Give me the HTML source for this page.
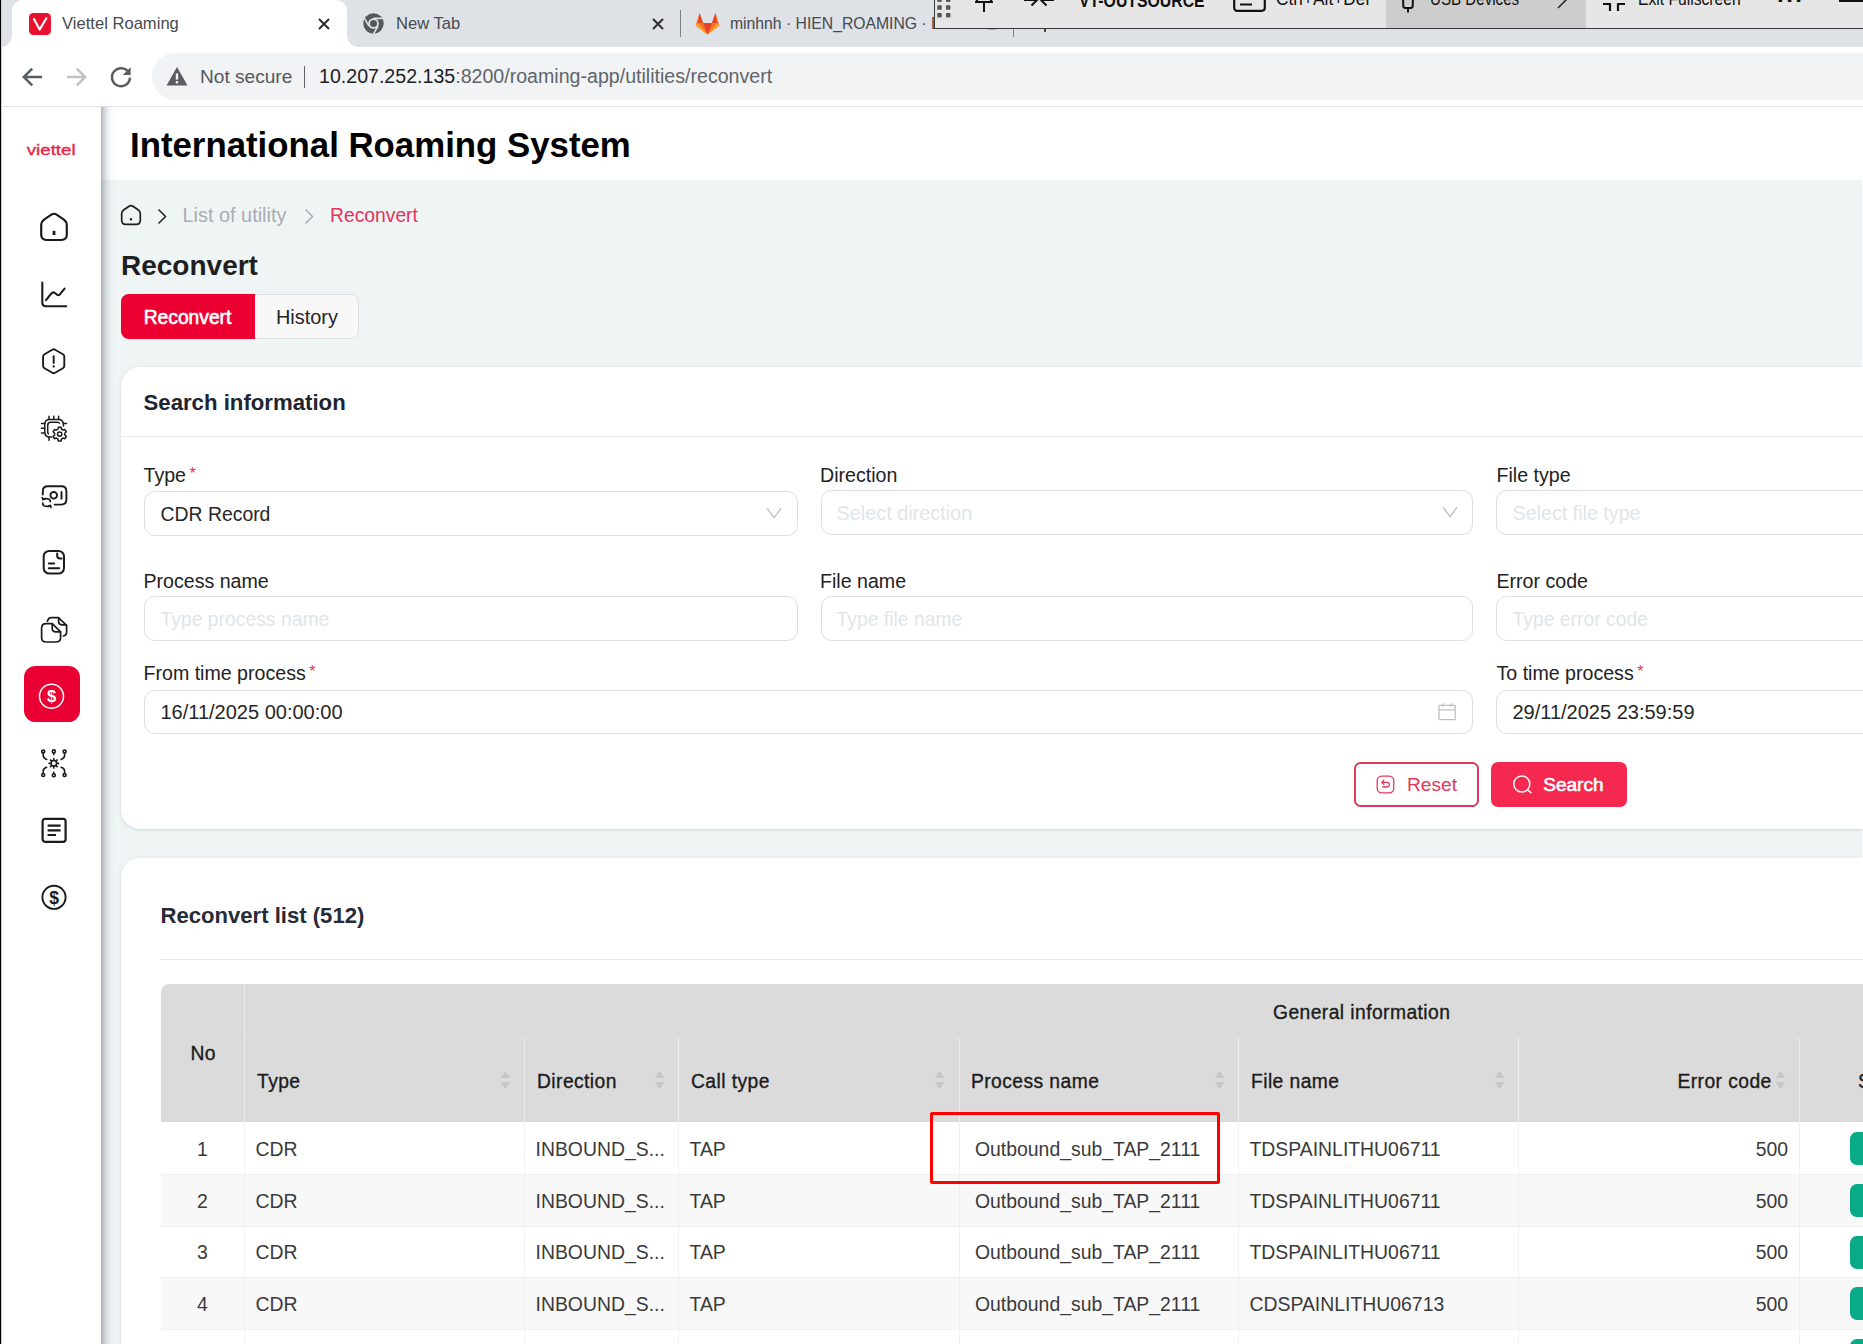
<!DOCTYPE html>
<html lang="en">
<head>
<meta charset="utf-8">
<title>Viettel Roaming</title>
<style>
*{box-sizing:border-box;margin:0;padding:0}
html,body{width:1863px;height:1344px;overflow:hidden;background:#fff}
body{font-family:"Liberation Sans",Arial,sans-serif;color:#222;position:relative}
.abs{position:absolute}
.t{position:absolute;white-space:nowrap;line-height:1}
/* ---------- browser chrome ---------- */
#tabstrip{left:0;top:0;width:1863px;height:47px;background:#dee1e6}
#acttab{left:12px;top:0;width:335px;height:47px;background:#fff;border-radius:11px 11px 0 0}
#acttab:before,#acttab:after{content:"";position:absolute;bottom:0;width:11px;height:11px}
#acttab:before{left:-11px;background:radial-gradient(circle at 0 0,transparent 10.5px,#fff 11px)}
#acttab:after{right:-11px;background:radial-gradient(circle at 100% 0,transparent 10.5px,#fff 11px)}
#navbar{left:0;top:47px;width:1863px;height:59px;background:#fff}
#omni{left:152px;top:53px;width:1800px;height:47px;border-radius:23.500px;background:#f1f3f4}
#chromeline{left:0;top:106px;width:1863px;height:1px;background:#e0e1e2}
.ct{color:#474a4f;font-size:16.6px}
/* overlay toolbar */
#ovl{left:934px;top:-30px;width:940px;height:59px;background:#e6e6e6;border:1px solid #3a3a3a;overflow:hidden}
#ovl .t{color:#111;font-size:18.5px;top:18.5px;transform-origin:0 50%}
/* ---------- app ---------- */
#side{left:1px;top:107px;width:100.400px;height:1237px;background:#fff}
#sideshadow{left:101.400px;top:107px;width:14px;height:1237px;background:linear-gradient(90deg,rgba(95,105,115,.48) 0,rgba(98,108,118,.37) 2px,rgba(100,112,122,.25) 4px,rgba(105,118,128,.12) 7px,rgba(110,125,135,.045) 10px,rgba(110,125,135,0) 14px)}
#hdr{left:101px;top:107px;width:1761px;height:73px;background:#fff}
#main{left:101px;top:180px;width:1761px;height:1164px;background:#eff4f5}
#blackline{left:0;top:0;width:2px;height:1344px;background:linear-gradient(90deg,#000 0,#000 1px,#cfcfcf 1px,#cfcfcf 2px)}
.card{background:#fff;border-radius:19px;box-shadow:0 1px 2.500px rgba(90,100,110,.16),0 0 6px rgba(90,100,110,.05)}
.lbl{font-size:19.6px;color:#222}
.inp{position:absolute;height:44.600px;border:1.200px solid #dedede;border-radius:10.500px;background:#fff}
.ph{color:#e1e5e8;font-size:19.35px}
.val{color:#262626;font-size:20px}
.th{font-size:19.3px;color:#1c1c1c;-webkit-text-stroke:.35px #1c1c1c;letter-spacing:.42px}
.td{font-size:19.4px;color:#3a3a3a}
.ast{color:#f0304f;font-size:16px}
</style>
</head>
<body>
<!-- ======= browser chrome ======= -->
<div id="tabstrip" class="abs"></div>
<div id="acttab" class="abs"></div>
<div id="navbar" class="abs"></div>
<div id="omni" class="abs"></div>
<div id="chromeline" class="abs"></div>

<!-- active tab -->
<svg class="abs" style="left:29px;top:13px" width="22" height="22" viewBox="0 0 22 22"><rect width="22" height="22" rx="4.5" fill="#e8102e"/><path d="M5 6 L10.600 16.600 L17.400 5.200" fill="none" stroke="#fff" stroke-width="2.100" stroke-linejoin="round" stroke-linecap="round"/></svg>
<div class="t ct" style="left:62px;top:16px">Viettel Roaming</div>
<svg class="abs" style="left:318px;top:18px" width="12" height="12" viewBox="0 0 12 12"><path d="M1 1L11 11M11 1L1 11" stroke="#303134" stroke-width="2.1"/></svg>
<!-- tab 2 -->
<svg class="abs" style="left:363px;top:13px" width="21" height="21" viewBox="0 0 21 21"><circle cx="10.5" cy="10.5" r="10.2" fill="#55585c"/><circle cx="10.5" cy="10.5" r="5.3" fill="#dee1e6"/><circle cx="10.5" cy="10.5" r="3.5" fill="#55585c"/><path d="M10.5 5.400H19.600M6 13.100 L1.500 5.300M15 13.100L10.500 20.900" stroke="#dee1e6" stroke-width="1.600" fill="none"/></svg>
<div class="t ct" style="left:396px;top:16px">New Tab</div>
<svg class="abs" style="left:652px;top:18px" width="12" height="12" viewBox="0 0 12 12"><path d="M1 1L11 11M11 1L1 11" stroke="#303134" stroke-width="2.1"/></svg>
<div class="abs" style="left:680px;top:10px;width:1px;height:27px;background:#7d8186"></div>
<!-- tab 3 gitlab -->
<svg class="abs" style="left:695px;top:12px" width="25" height="23" viewBox="0 0 25 23"><path d="M12.5 22.5L0.6 13.6 4.6 1 8 11h9L20.4 1l4 12.6z" fill="#fc6d26"/><path d="M12.5 22.5L8 11h9z" fill="#e24329"/><path d="M0.6 13.6L12.5 22.5 3.2 11zM24.4 13.6L12.5 22.5 21.8 11z" fill="#fca326"/><path d="M4.6 1L8 11H3.2zM20.4 1L17 11h4.8z" fill="#e24329"/></svg>
<div class="t ct" style="left:730px;top:16px;transform-origin:0 50%;transform:scaleX(.948)">minhnh · HIEN_ROAMING · LG5</div>
<!-- leftovers of tabstrip under overlay -->
<div class="abs" style="left:1013px;top:28px;width:1px;height:9px;background:#7d8186"></div>
<div class="abs" style="left:1044px;top:28px;width:2px;height:4px;background:#44474a"></div>
<div class="abs" style="left:988px;top:28px;width:8px;height:2px;background:#a7abb0"></div>
<!-- nav bar -->
<svg class="abs" style="left:20.500px;top:65.800px" width="22" height="22" viewBox="0 0 22 22"><path d="M21 11H3.2M11.2 2.6L2.8 11l8.4 8.4" fill="none" stroke="#5a5e63" stroke-width="2.5"/></svg>
<svg class="abs" style="left:65.500px;top:65.800px" width="22" height="22" viewBox="0 0 22 22"><path d="M1 11H18.8M10.8 2.6L19.2 11l-8.4 8.4" fill="none" stroke="#bfc2c5" stroke-width="2.5"/></svg>
<svg class="abs" style="left:109px;top:64.700px" width="24" height="24" viewBox="0 0 24 24"><path d="M19.6 7.4A9 9 0 1 0 21 12.6" fill="none" stroke="#5a5e63" stroke-width="2.5"/><path d="M21.6 2.2V10H13.8z" fill="#5a5e63"/></svg>
<svg class="abs" style="left:166px;top:66px" width="22" height="20" viewBox="0 0 22 20"><path d="M11 1L21.5 19.5H0.5z" fill="#5a5e63"/><rect x="9.8" y="7.4" width="2.4" height="6.2" fill="#f1f3f4"/><rect x="9.8" y="15" width="2.4" height="2.4" fill="#f1f3f4"/></svg>
<div class="t" style="left:200px;top:67px;font-size:19.1px;color:#55585c">Not secure</div>
<div class="abs" style="left:304px;top:66px;width:1px;height:22px;background:#5f6368"></div>
<div class="t" style="left:319px;top:67px;font-size:19.6px;color:#202124">10.207.252.135<span style="color:#60646a">:8200/roaming-app/utilities/reconvert</span></div>
<!-- remote-session overlay toolbar (clipped by top edge) -->
<div id="ovl" class="abs">
  <svg class="abs" style="left:2px;top:0" width="18" height="59" viewBox="0 0 18 59"><g fill="#555"><rect x="0.3" y="18.8" width="4.400" height="4.400"/><rect x="9" y="18.8" width="4.400" height="4.400"/><rect x="0.3" y="26.5" width="4.400" height="4.400"/><rect x="9" y="26.5" width="4.400" height="4.400"/><rect x="0.3" y="34.3" width="4.400" height="4.400"/><rect x="9" y="34.3" width="4.400" height="4.400"/><rect x="0.3" y="42" width="4.400" height="4.400"/><rect x="9" y="42" width="4.400" height="4.400"/></g></svg>
  <svg class="abs" style="left:40px;top:14px" width="18" height="28" viewBox="0 0 18 28"><path d="M4 2H14V12L17 17H1L4 12zM9 17V27" fill="none" stroke="#111" stroke-width="2"/></svg>
  <svg class="abs" style="left:89px;top:19.200px" width="30" height="20" viewBox="0 0 30 20"><path d="M0 10H12M7.500 4.500L13 10 7.500 15.500M30 10H18M22.500 4.500L17 10 22.500 15.500" fill="none" stroke="#111" stroke-width="2"/></svg>
  <div class="t" style="left:144px;top:20px;font-weight:bold;font-size:19px;transform:scaleX(.832)">VT-OUTSOURCE</div>
  <svg class="abs" style="left:298px;top:16px" width="33" height="25" viewBox="0 0 33 25"><rect x="1.2" y="1.2" width="30.6" height="22.6" rx="3" fill="none" stroke="#111" stroke-width="2.2"/><path d="M7 12h5M7 17.5h12" stroke="#111" stroke-width="2"/></svg>
  <div class="t" style="left:341px;transform:scaleX(.935)">Ctrl+Alt+Del</div>
  <div class="abs" style="left:451px;top:0;width:200px;height:59px;background:#cdcdcd"></div>
  <svg class="abs" style="left:467px;top:14px" width="12" height="28" viewBox="0 0 12 28"><path d="M1.2 6H10.8V20.5Q10.8 23 8.3 23H3.700Q1.2 23 1.2 20.500zM6 23V27.500M3.5 6V1H8.5V6" fill="none" stroke="#111" stroke-width="2"/></svg>
  <div class="t" style="left:494.600px;transform:scaleX(.818)">USB Devices</div>
  <svg class="abs" style="left:621px;top:20px" width="12" height="18" viewBox="0 0 12 18"><path d="M2 17L10 9 2 1" fill="none" stroke="#222" stroke-width="1.5"/></svg>
  <svg class="abs" style="left:667px;top:17px" width="24" height="24" viewBox="0 0 24 24"><path d="M1 8H8V1M16 1V8H23M1 16H8V23M16 23V16H23" fill="none" stroke="#111" stroke-width="2.2"/></svg>
  <div class="t" style="left:702.600px;transform:scaleX(.846)">Exit Fullscreen</div>
  <div class="t" style="left:842px;top:10.500px;font-weight:bold;font-size:24px;letter-spacing:2.5px">...</div>
  <div class="abs" style="left:904px;top:26px;width:40px;height:5px;background:#111"></div>
</div>

<!-- ======= app ======= -->
<div id="hdr" class="abs"></div>
<div id="main" class="abs"></div>
<div id="sideshadow" class="abs"></div>
<div id="side" class="abs"></div>

<!-- sidebar -->
<svg class="abs" style="left:24px;top:140px" width="56" height="20" viewBox="0 0 56 20"><text x="2.700" y="14.700" font-family="'Liberation Sans',Arial,sans-serif" font-weight="normal" stroke="#e5274a" stroke-width="0.35" font-size="15" fill="#e5274a" textLength="49" lengthAdjust="spacingAndGlyphs">viettel</text></svg>
<svg class="abs" style="left:38px;top:211px" width="32" height="32" viewBox="0 0 32 32" fill="none" stroke="#1b1b1b" stroke-width="2.2" stroke-linecap="round" stroke-linejoin="round"><path d="M3.200 14.6Q3.200 10.600 6.400 8.400L13.400 3.600Q16 1.900 18.600 3.600L25.600 8.400Q28.800 10.600 28.800 14.600V23.600Q28.800 29 23.400 29H8.600Q3.200 29 3.200 23.600z"/><path d="M16 19.800V24" stroke-width="2.8" stroke-linecap="butt"/></svg>
<svg class="abs" style="left:38px;top:278px" width="32" height="32" viewBox="0 0 32 32" fill="none" stroke="#1b1b1b" stroke-width="2.1" stroke-linecap="round" stroke-linejoin="round"><path d="M4.300 4.500V24.500Q4.300 28.200 8 28.200H28.200"/><path d="M8 22.200L13.200 15.600Q15 13.600 17 15L19.200 16.800Q20.600 17.600 21.800 16.400L26.600 10.600"/></svg>
<svg class="abs" style="left:38px;top:345px" width="32" height="32" viewBox="0 0 32 32" fill="none" stroke="#1b1b1b" stroke-width="1.9" stroke-linecap="round" stroke-linejoin="round"><path d="M14.300 4.700Q15.700 3.900 17.100 4.700L24.900 9.200Q26.300 10 26.300 11.600V20.800Q26.300 22.400 24.900 23.200L17.100 27.700Q15.700 28.500 14.300 27.700L6.500 23.200Q5.100 22.400 5.100 20.800V11.600Q5.100 10 6.500 9.200z"/><path d="M15.700 11.200V18" /><path d="M15.700 21.300V21.500" stroke-width="2.3"/></svg>
<svg class="abs" style="left:38px;top:412px" width="32" height="32" viewBox="0 0 32 32" fill="none" stroke="#1b1b1b" stroke-width="1.500" stroke-linecap="round" stroke-linejoin="round"><path d="M25.400 14V12.500Q25.400 7.500 20.400 7.500H11.800Q6.800 7.500 6.800 12.500V20Q6.800 25 11.800 25H13.600"/><path d="M21.400 11Q20.400 10.300 18.800 10.300H12.800Q9.700 10.300 9.700 13.400V19.400Q9.700 21 10.400 22"/><path d="M11 4.200V7.200M15.800 4.200V7.200M20.600 4.200V7.200M3.500 11.500H6.500M3.500 16.300H6.500M3.500 21.100H6.500M11 25.200V28.200M25.800 11.500H28.500"/><path d="M19.92 17.21L20.36 15.23L23.04 15.23L23.48 17.21L25.04 18.12L26.98 17.51L28.32 19.82L26.82 21.20L26.82 23.00L28.32 24.38L26.98 26.69L25.04 26.08L23.48 26.99L23.04 28.97L20.36 28.97L19.92 26.99L18.36 26.08L16.42 26.69L15.08 24.38L16.58 23.00L16.58 21.20L15.08 19.82L16.42 17.51L18.36 18.12z" stroke-width="1.500" fill="#fff"/><circle cx="21.700" cy="22.100" r="2.200" stroke-width="1.500"/></svg>
<svg class="abs" style="left:38px;top:480px" width="32" height="32" viewBox="0 0 32 32" fill="none" stroke="#1b1b1b" stroke-width="1.900" stroke-linecap="round" stroke-linejoin="round"><path d="M4.800 14.500V11.200Q4.800 6.200 9.800 6.200H23.400Q28.400 6.200 28.400 11.200V19.600Q28.400 24.600 23.400 24.600H16.600"/><circle cx="15.700" cy="15.300" r="3.300"/><path d="M23.500 12V18.800"/><path d="M5 19.400Q7.500 18.200 10.500 19Q12.600 19.800 12.200 21.600M12.400 25.600Q9.600 26.800 6.400 26Q4.400 25.200 4.800 23.200" stroke-width="1.700"/><path d="M4.200 17.600L5.200 19.600 7.200 18.600M13 27.400L12.200 25.400 10.200 26.400" stroke-width="1.700"/></svg>
<svg class="abs" style="left:38px;top:546px" width="32" height="32" viewBox="0 0 32 32" fill="none" stroke="#1b1b1b" stroke-width="2" stroke-linecap="round" stroke-linejoin="round"><rect x="5.700" y="4.900" width="20.300" height="22.700" rx="5.600"/><path d="M19.200 7.600V9.800Q19.200 12.600 22 12.600H23.600"/><path d="M10.800 17.600H16.200M10.800 22.300H21.200"/></svg>
<svg class="abs" style="left:38px;top:613px" width="32" height="32" viewBox="0 0 32 32" fill="none" stroke="#1b1b1b" stroke-width="1.700" stroke-linecap="round" stroke-linejoin="round"><path d="M9.400 8.200Q10.200 4.600 13.800 4.600H20.400L28.600 12.400V19.200Q28.600 22.400 25.400 23"/><path d="M20.600 4.800V8.600Q20.600 11.800 23.800 11.800H28.200"/><path d="M3.600 15.200Q3.600 10.600 8.200 10.600H14.200L22.600 18.800V24.400Q22.600 29 18 29H8.200Q3.600 29 3.600 24.400z"/><path d="M14.200 10.800V15.200Q14.200 18.800 17.800 18.800H22.400"/></svg>
<div class="abs" style="left:23.500px;top:666px;width:56px;height:55.500px;border-radius:11.500px;background:#ea0032"></div>
<svg class="abs" style="left:38px;top:680px" width="32" height="32" viewBox="0 0 32 32" fill="none" stroke="#fff" stroke-width="1.500"><circle cx="13.500" cy="16.200" r="12"/><text x="13.500" y="22" text-anchor="middle" font-family="'Liberation Sans',Arial,sans-serif" font-size="16.500" font-weight="bold" fill="#fff" stroke="none">$</text></svg>
<svg class="abs" style="left:38px;top:747px" width="32" height="32" viewBox="0 0 32 32" fill="none" stroke="#1b1b1b" stroke-width="1.600" stroke-linecap="round" stroke-linejoin="round"><circle cx="15.800" cy="16.300" r="2.800"/><path d="M15.800 11.600V12.600M15.800 20V21M11.100 16.300H12.100M19.500 16.300H20.500M12.500 13L13.200 13.700M18.400 18.900L19.100 19.600M19.100 13L18.400 13.700M13.200 18.900L12.500 19.600" stroke-width="1.700"/><circle cx="5.200" cy="4.600" r="1.500"/><circle cx="15.800" cy="4.400" r="1.500"/><circle cx="26.600" cy="4.600" r="1.500"/><circle cx="5.200" cy="28" r="1.500"/><circle cx="15.800" cy="28.200" r="1.500"/><circle cx="26.600" cy="28" r="1.500"/><path d="M5.200 6.200V8.600Q5.200 11.200 8.600 12.400M26.600 6.200V8.600Q26.600 11.200 23.200 12.400M5.200 26.400V24Q5.200 21.400 8.600 20.200M26.600 26.400V24Q26.600 21.400 23.200 20.200M15.800 6V7.400M15.800 25.200V26.600"/></svg>
<svg class="abs" style="left:38px;top:814px" width="32" height="32" viewBox="0 0 32 32" fill="none" stroke="#1b1b1b" stroke-width="2.200" stroke-linecap="round" stroke-linejoin="round"><rect x="4.600" y="4.800" width="23" height="23" rx="2.500"/><path d="M9.600 11.600H22.600M9.600 16.300H22.600M9.600 21H18" stroke-linecap="butt"/></svg>
<svg class="abs" style="left:38px;top:881px" width="32" height="32" viewBox="0 0 32 32" fill="none" stroke="#1b1b1b" stroke-width="1.900"><circle cx="16" cy="16.300" r="11.600"/><text x="16" y="22.600" text-anchor="middle" font-family="'Liberation Sans',Arial,sans-serif" font-size="17.500" font-weight="bold" fill="#1b1b1b" stroke="none">$</text></svg>


<!-- header -->
<div class="t" id="title" style="left:130px;top:128px;font-size:34.8px;font-weight:bold;color:#000">International Roaming System</div>
<!-- breadcrumb -->
<svg class="abs" style="left:120px;top:204px" width="22" height="22" viewBox="0 0 22 22" fill="none" stroke="#1f1f1f" stroke-width="1.700" stroke-linecap="round" stroke-linejoin="round"><path d="M1.700 9.800Q1.700 7.400 3.600 6L9 2.200Q11 0.900 13 2.200L18.400 6Q20.300 7.400 20.300 9.800V16.200Q20.300 20.300 16.200 20.300H5.800Q1.700 20.300 1.700 16.200z"/><path d="M11 14.200V16.400" stroke-width="2.200" stroke-linecap="butt"/></svg>
<svg class="abs" style="left:157px;top:208px" width="10" height="17" viewBox="0 0 10 17" fill="none" stroke="#2b2b2b" stroke-width="1.600"><path d="M1.500 1.500L8.500 8.500 1.500 15.500"/></svg>
<div class="t" id="bc1" style="left:182.500px;top:206.200px;font-size:19.9px;color:#a9adb3">List of utility</div>
<svg class="abs" style="left:304px;top:208px" width="10" height="17" viewBox="0 0 10 17" fill="none" stroke="#a3a8ad" stroke-width="1.400"><path d="M1.500 1.500L8.500 8.500 1.500 15.500"/></svg>
<div class="t" id="bc2" style="left:330px;top:206.200px;font-size:19.3px;color:#e4325a">Reconvert</div>
<!-- page title -->
<div class="t" id="h2" style="left:121px;top:252px;font-size:28px;font-weight:bold;color:#1f1f1f">Reconvert</div>
<!-- tabs -->
<div class="abs" style="left:121px;top:294.400px;width:238px;height:44.400px;border-radius:8px;background:#f8f8f8;border:1px solid #e0e0e0"></div>
<div class="abs" style="left:121px;top:294.400px;width:134px;height:44.400px;border-radius:8px 0 0 8px;background:#eb0031"></div>
<div class="t" id="tab1" style="left:143.700px;top:308.300px;font-size:19.3px;color:#fff;-webkit-text-stroke:.6px #fff;letter-spacing:-0.03px">Reconvert</div>
<div class="t" id="tab2" style="left:276px;top:308.200px;font-size:19.9px;color:#262626">History</div>
<!-- search card -->
<div class="abs card" style="left:121px;top:366.500px;width:1800px;height:462.500px"></div>
<div class="t" id="si" style="left:143.500px;top:392.400px;font-size:22.2px;font-weight:bold;color:#20242e">Search information</div>
<div class="abs" style="left:121px;top:435.500px;width:1760px;height:1px;background:#e9e9e9"></div>
<!-- row 1 -->
<div class="t lbl" id="l1" style="left:143.500px;top:466.200px">Type<span class="ast" style="position:relative;left:3.500px;top:-3.500px">*</span></div>
<div class="inp" style="left:143.500px;top:491px;width:654px"></div>
<div class="t val" id="v1" style="left:160.500px;top:505.100px;font-size:19.4px">CDR Record</div>
<svg class="abs" style="left:766px;top:506px" width="17" height="14" viewBox="0 0 17 14" fill="none" stroke="#bebebe" stroke-width="1.400"><path d="M1.200 2.400L8.100 11.600 15 2.400"/></svg>
<div class="t lbl" id="l2" style="left:820px;top:466.200px">Direction</div>
<div class="inp" style="left:820.500px;top:490px;width:652.500px"></div>
<div class="t ph" id="p2" style="font-size:19.85px;left:836.500px;top:503.800px">Select direction</div>
<svg class="abs" style="left:1441.700px;top:504.800px" width="17" height="14" viewBox="0 0 17 14" fill="none" stroke="#bebebe" stroke-width="1.400"><path d="M1.200 2.400L8.100 11.600 15 2.400"/></svg>
<div class="t lbl" id="l3" style="left:1496.500px;top:466.200px">File type</div>
<div class="inp" style="left:1496px;top:490px;width:654px"></div>
<div class="t ph" id="p3" style="font-size:19.7px;left:1512.500px;top:503.800px">Select file type</div>
<!-- row 2 -->
<div class="t lbl" id="l4" style="left:143.500px;top:571.900px">Process name</div>
<div class="inp" style="left:143.500px;top:596px;width:654px"></div>
<div class="t ph" id="p4" style="left:160.500px;top:609.800px">Type process name</div>
<div class="t lbl" id="l5" style="left:820px;top:571.900px">File name</div>
<div class="inp" style="left:820.500px;top:596px;width:652.500px"></div>
<div class="t ph" id="p5" style="left:836.500px;top:609.800px">Type file name</div>
<div class="t lbl" id="l6" style="left:1496.500px;top:571.900px">Error code</div>
<div class="inp" style="left:1496px;top:596px;width:654px"></div>
<div class="t ph" id="p6" style="left:1512.500px;top:609.800px">Type error code</div>
<!-- row 3 -->
<div class="t lbl" id="l7" style="left:143.500px;top:664px">From time process<span class="ast" style="position:relative;left:3.500px;top:-3.500px">*</span></div>
<div class="inp" style="left:143.500px;top:689.500px;width:1329.500px"></div>
<div class="t val" id="v7" style="left:160.500px;top:702px">16/11/2025 00:00:00</div>
<svg class="abs" style="left:1437px;top:701px" width="20" height="20" viewBox="0 0 20 20" fill="none" stroke="#bdbdbd" stroke-width="1.250"><rect x="2" y="4.400" width="16.200" height="14.200" rx="0.600"/><path d="M2 8.900H18.200M6 2.300V5.600M14 2.300V5.600"/></svg>
<div class="t lbl" id="l8" style="left:1496.500px;top:664px">To time process<span class="ast" style="position:relative;left:3.500px;top:-3.500px">*</span></div>
<div class="inp" style="left:1496px;top:689.500px;width:654px"></div>
<div class="t val" id="v8" style="left:1512.500px;top:702px">29/11/2025 23:59:59</div>
<!-- buttons -->
<div class="abs" style="left:1354px;top:762px;width:125px;height:45px;border:2px solid #de3a5e;border-radius:6.500px;background:#fff"></div>
<svg class="abs" style="left:1376px;top:775px" width="19" height="19" viewBox="0 0 19 19" fill="none" stroke="#e5365c" stroke-width="1.300" stroke-linecap="round" stroke-linejoin="round"><rect x="1.200" y="1.200" width="16.600" height="16.600" rx="4.500"/><path d="M6 7.300H11Q13.400 7.300 13.400 9.600Q13.400 12 11 12H6.800M7.800 5.300L5.800 7.300 7.800 9.300"/></svg>
<div class="t" id="breset" style="left:1407px;top:775px;font-size:19.2px;color:#e5365c">Reset</div>
<div class="abs" style="left:1490.500px;top:762px;width:136.500px;height:45px;border-radius:7px;background:#f5284f"></div>
<svg class="abs" style="left:1512px;top:774px" width="21" height="21" viewBox="0 0 21 21" fill="none" stroke="#fff" stroke-width="1.500" stroke-linecap="round"><circle cx="9.800" cy="10" r="8"/><path d="M16.200 16.300L19 18.600"/></svg>
<div class="t" id="bsearch" style="left:1543.300px;top:775.400px;font-size:19px;color:#fff;-webkit-text-stroke:.6px #fff">Search</div>

<!-- list card -->
<div class="abs card" style="left:121px;top:858px;width:1800px;height:560px"></div>
<div class="t" id="rl" style="left:160.500px;top:904.600px;font-size:22.1px;font-weight:bold;color:#262b36">Reconvert list (512)</div>
<div class="abs" style="left:160px;top:958.500px;width:1720px;height:1px;background:#e6e6e6"></div>
<div class="abs" style="left:161px;top:984px;width:1760px;height:138px;background:#dbdbdb;border-radius:8px 0 0 0"></div>
<div class="abs" style="left:161px;top:1122px;width:1760px;height:52.500px;background:#fff;border-bottom:1px solid #f0f0f0"></div>
<div class="abs" style="left:161px;top:1174.5px;width:1760px;height:52.0px;background:#f8f8f8;border-bottom:1px solid #f0f0f0"></div>
<div class="abs" style="left:161px;top:1226.5px;width:1760px;height:51.0px;background:#fff;border-bottom:1px solid #f0f0f0"></div>
<div class="abs" style="left:161px;top:1277.5px;width:1760px;height:52.0px;background:#f8f8f8;border-bottom:1px solid #f0f0f0"></div>
<div class="abs" style="left:161px;top:1329.5px;width:1760px;height:52.0px;background:#fff;border-bottom:1px solid #f0f0f0"></div>
<div class="abs" style="left:244px;top:984px;width:1px;height:138px;background:#ececec"></div>
<div class="abs" style="left:245px;top:1037px;width:1660px;height:1px;background:#dfdfdf"></div>
<div class="abs" style="left:524px;top:1038px;width:1px;height:84px;background:#ececec"></div>
<div class="abs" style="left:678px;top:1038px;width:1px;height:84px;background:#ececec"></div>
<div class="abs" style="left:958.5px;top:1038px;width:1px;height:84px;background:#ececec"></div>
<div class="abs" style="left:1238px;top:1038px;width:1px;height:84px;background:#ececec"></div>
<div class="abs" style="left:1518px;top:1038px;width:1px;height:84px;background:#ececec"></div>
<div class="abs" style="left:1799px;top:1038px;width:1px;height:84px;background:#ececec"></div>
<div class="abs" style="left:244px;top:1122px;width:1px;height:230px;background:#f0f0f0"></div>
<div class="abs" style="left:524px;top:1122px;width:1px;height:230px;background:#f0f0f0"></div>
<div class="abs" style="left:678px;top:1122px;width:1px;height:230px;background:#f0f0f0"></div>
<div class="abs" style="left:958.5px;top:1122px;width:1px;height:230px;background:#f0f0f0"></div>
<div class="abs" style="left:1238px;top:1122px;width:1px;height:230px;background:#f0f0f0"></div>
<div class="abs" style="left:1518px;top:1122px;width:1px;height:230px;background:#f0f0f0"></div>
<div class="abs" style="left:1799px;top:1122px;width:1px;height:230px;background:#f0f0f0"></div>
<div class="t th" id="hno" style="left:190.5px;top:1044.1px;">No</div>
<div class="t th" id="hgi" style="left:1273px;top:1003.1px;">General information</div>
<div class="t th" id="h1" style="left:257px;top:1071.6px;">Type</div>
<div class="t th" id="h2b" style="left:537px;top:1071.6px;">Direction</div>
<div class="t th" id="h3" style="left:691px;top:1071.6px;">Call type</div>
<div class="t th" id="h4" style="left:971px;top:1071.6px;">Process name</div>
<div class="t th" id="h5" style="left:1251px;top:1071.6px;">File name</div>
<div class="t th" id="h6" style="left:1677.5px;top:1071.6px;">Error code</div>
<div class="t th" id="h7" style="left:1858px;top:1071.6px;">Status</div>
<svg class="abs" style="left:499.5px;top:1070.500px" width="11" height="18" viewBox="0 0 11 18"><path d="M5.500 0.300L10.300 6.900H0.700z" fill="#c5c5c5"/><path d="M5.500 17.700L10.300 11.300H0.700z" fill="#c5c5c5"/></svg>
<svg class="abs" style="left:653.5px;top:1070.500px" width="11" height="18" viewBox="0 0 11 18"><path d="M5.500 0.300L10.300 6.900H0.700z" fill="#c5c5c5"/><path d="M5.500 17.700L10.300 11.300H0.700z" fill="#c5c5c5"/></svg>
<svg class="abs" style="left:934px;top:1070.500px" width="11" height="18" viewBox="0 0 11 18"><path d="M5.500 0.300L10.300 6.900H0.700z" fill="#c5c5c5"/><path d="M5.500 17.700L10.300 11.300H0.700z" fill="#c5c5c5"/></svg>
<svg class="abs" style="left:1213.5px;top:1070.500px" width="11" height="18" viewBox="0 0 11 18"><path d="M5.500 0.300L10.300 6.900H0.700z" fill="#c5c5c5"/><path d="M5.500 17.700L10.300 11.300H0.700z" fill="#c5c5c5"/></svg>
<svg class="abs" style="left:1494px;top:1070.500px" width="11" height="18" viewBox="0 0 11 18"><path d="M5.500 0.300L10.300 6.900H0.700z" fill="#c5c5c5"/><path d="M5.500 17.700L10.300 11.300H0.700z" fill="#c5c5c5"/></svg>
<svg class="abs" style="left:1774.5px;top:1070.500px" width="11" height="18" viewBox="0 0 11 18"><path d="M5.500 0.300L10.300 6.900H0.700z" fill="#c5c5c5"/><path d="M5.500 17.700L10.300 11.300H0.700z" fill="#c5c5c5"/></svg>
<div class="t td" style="left:161px;width:83px;text-align:center;top:1139.7px">1</div>
<div class="t td c1" style="left:255.5px;top:1139.7px">CDR</div>
<div class="t td c2" style="left:535.5px;top:1139.7px">INBOUND_S...</div>
<div class="t td c3" style="left:689.5px;top:1139.7px">TAP</div>
<div class="t td c4" style="left:975px;top:1139.7px">Outbound_sub_TAP_2111</div>
<div class="t td c5" style="left:1249.5px;top:1139.7px">TDSPAINLITHU06711</div>
<div class="t td c6" style="left:1700px;width:88px;text-align:right;top:1139.7px">500</div>
<div class="abs" style="left:1850px;top:1132.0px;width:60px;height:33px;border-radius:7px;background:#08ab85"></div>
<div class="t td" style="left:161px;width:83px;text-align:center;top:1191.7px">2</div>
<div class="t td c1" style="left:255.5px;top:1191.7px">CDR</div>
<div class="t td c2" style="left:535.5px;top:1191.7px">INBOUND_S...</div>
<div class="t td c3" style="left:689.5px;top:1191.7px">TAP</div>
<div class="t td c4" style="left:975px;top:1191.7px">Outbound_sub_TAP_2111</div>
<div class="t td c5" style="left:1249.5px;top:1191.7px">TDSPAINLITHU06711</div>
<div class="t td c6" style="left:1700px;width:88px;text-align:right;top:1191.7px">500</div>
<div class="abs" style="left:1850px;top:1184.0px;width:60px;height:33px;border-radius:7px;background:#08ab85"></div>
<div class="t td" style="left:161px;width:83px;text-align:center;top:1243.2px">3</div>
<div class="t td c1" style="left:255.5px;top:1243.2px">CDR</div>
<div class="t td c2" style="left:535.5px;top:1243.2px">INBOUND_S...</div>
<div class="t td c3" style="left:689.5px;top:1243.2px">TAP</div>
<div class="t td c4" style="left:975px;top:1243.2px">Outbound_sub_TAP_2111</div>
<div class="t td c5" style="left:1249.5px;top:1243.2px">TDSPAINLITHU06711</div>
<div class="t td c6" style="left:1700px;width:88px;text-align:right;top:1243.2px">500</div>
<div class="abs" style="left:1850px;top:1235.5px;width:60px;height:33px;border-radius:7px;background:#08ab85"></div>
<div class="t td" style="left:161px;width:83px;text-align:center;top:1294.7px">4</div>
<div class="t td c1" style="left:255.5px;top:1294.7px">CDR</div>
<div class="t td c2" style="left:535.5px;top:1294.7px">INBOUND_S...</div>
<div class="t td c3" style="left:689.5px;top:1294.7px">TAP</div>
<div class="t td c4" style="left:975px;top:1294.7px">Outbound_sub_TAP_2111</div>
<div class="t td c5" style="left:1249.5px;top:1294.7px">CDSPAINLITHU06713</div>
<div class="t td c6" style="left:1700px;width:88px;text-align:right;top:1294.7px">500</div>
<div class="abs" style="left:1850px;top:1287.0px;width:60px;height:33px;border-radius:7px;background:#08ab85"></div>
<div class="t td" style="left:161px;width:83px;text-align:center;top:1346.7px">5</div>
<div class="t td c1" style="left:255.5px;top:1346.7px">CDR</div>
<div class="t td c2" style="left:535.5px;top:1346.7px">INBOUND_S...</div>
<div class="t td c3" style="left:689.5px;top:1346.7px">TAP</div>
<div class="t td c4" style="left:975px;top:1346.7px">Outbound_sub_TAP_2111</div>
<div class="t td c5" style="left:1249.5px;top:1346.7px">CDSPAINLITHU06713</div>
<div class="t td c6" style="left:1700px;width:88px;text-align:right;top:1346.7px">500</div>
<div class="abs" style="left:1850px;top:1339.0px;width:60px;height:33px;border-radius:7px;background:#08ab85"></div>
<div class="abs" style="left:930px;top:1112px;width:289.500px;height:71.500px;border:3.500px solid #fe0000;border-radius:2px"></div>

<div id="blackline" class="abs"></div>
</body>
</html>
